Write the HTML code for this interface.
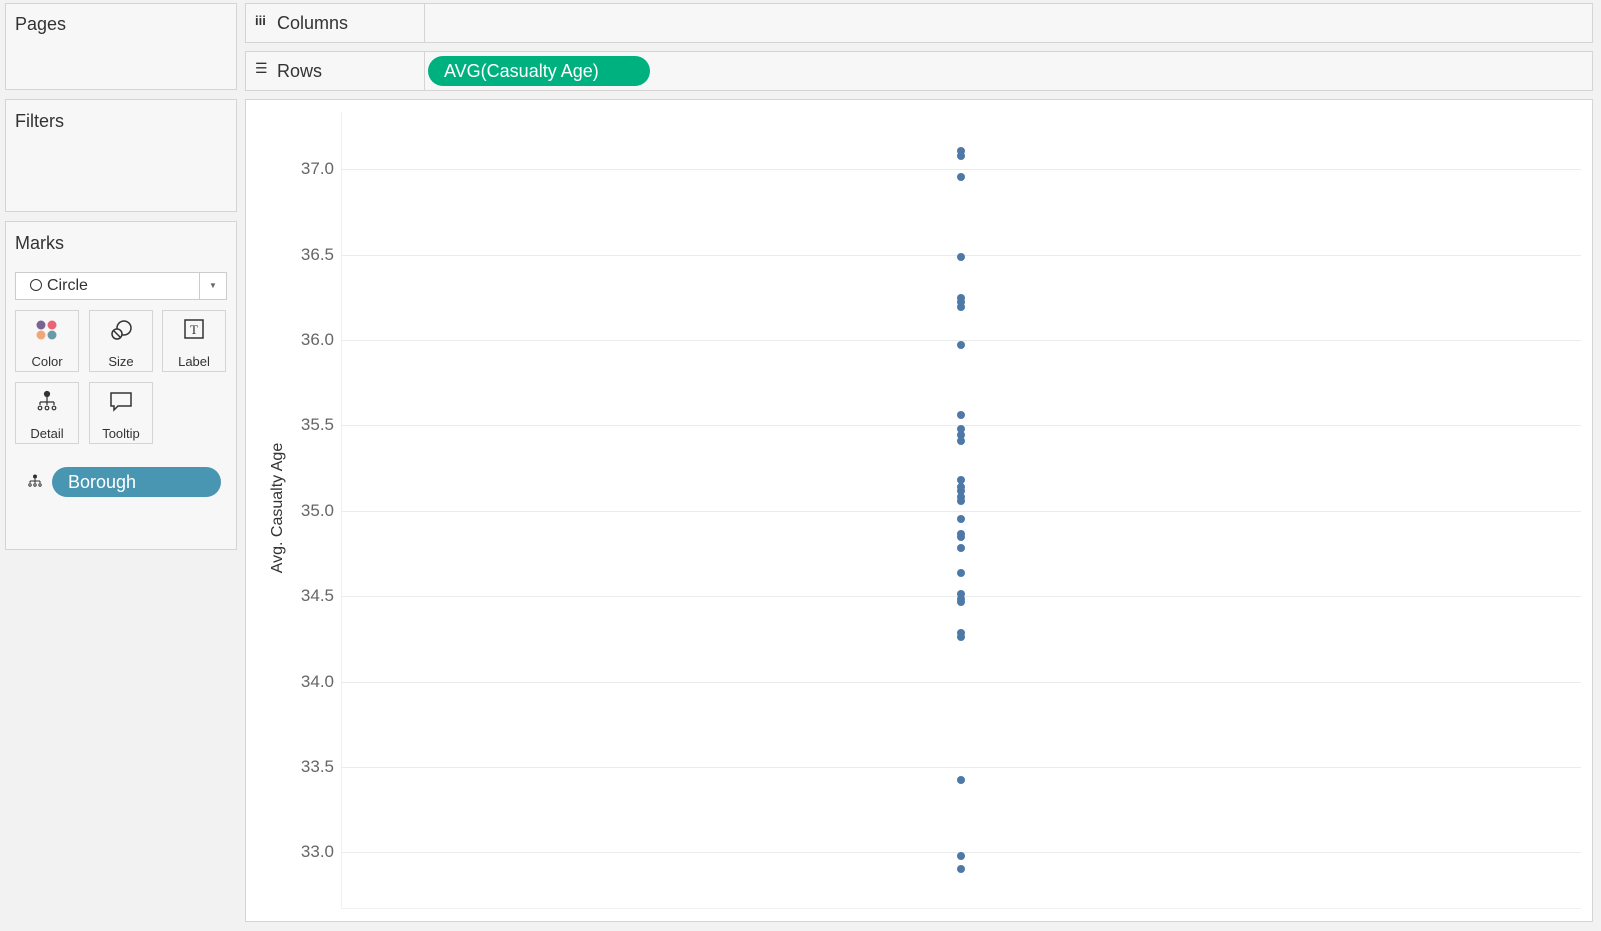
<!DOCTYPE html><html><head><style>
body{margin:0;width:1601px;height:931px;background:#f2f2f2;font-family:"Liberation Sans",sans-serif;position:relative;overflow:hidden;color:#333}
.b{position:absolute;background:#f7f7f7;border:1px solid #d4d4d4;box-sizing:border-box}
.t{position:absolute;font-size:18px;color:#333}
.btn{position:absolute;background:#f7f7f7;border:1px solid #d4d4d4;box-sizing:border-box;width:64px;height:62px;font-size:13px;text-align:center}
.btn span{position:absolute;bottom:2px;left:0;right:0}
.pill{position:absolute;border-radius:16px;color:#fff;font-size:18px}
.g{position:absolute;left:341px;width:1240px;height:1px;background:#ebebeb}
.yl{position:absolute;left:280px;width:54px;text-align:right;font-size:17px;color:#666}
.d{position:absolute;left:957px;width:8px;height:8px;border-radius:50%;background:#4e79a7}
</style></head><body>
<div class="b" style="left:5px;top:3px;width:232px;height:87px"></div><div class="t" style="left:15px;top:14px">Pages</div>
<div class="b" style="left:245px;top:3px;width:1348px;height:40px"></div>
<div style="position:absolute;left:424px;top:3px;width:1px;height:40px;background:#d4d4d4"></div>
<div class="t" style="left:255px;top:13px;font-size:13px;font-weight:bold">iii</div><div class="t" style="left:277px;top:13px">Columns</div>
<div class="b" style="left:245px;top:51px;width:1348px;height:40px"></div>
<div style="position:absolute;left:424px;top:51px;width:1px;height:40px;background:#d4d4d4"></div>
<div class="t" style="left:255px;top:60px;font-size:14px">☰</div><div class="t" style="left:277px;top:61px">Rows</div>
<div class="pill" style="left:428px;top:56px;width:222px;height:30px;background:#00b180;line-height:30px;text-indent:16px">AVG(Casualty Age)</div>
<div class="b" style="left:5px;top:99px;width:232px;height:113px"></div><div class="t" style="left:15px;top:111px">Filters</div>
<div class="b" style="left:5px;top:221px;width:232px;height:329px"></div><div class="t" style="left:15px;top:233px">Marks</div>
<div style="position:absolute;left:15px;top:272px;width:212px;height:28px;background:#fff;border:1px solid #ccc;box-sizing:border-box;font-size:16px;line-height:26px">
<span style="display:inline-block;width:10px;height:10px;border:1.5px solid #333;border-radius:50%;margin:0 5px 0 14px;vertical-align:-1px"></span>Circle
<div style="position:absolute;right:0;top:0;width:26px;height:26px;border-left:1px solid #ccc;font-size:8px;text-align:center;color:#666">▼</div></div>
<div class="btn" style="left:15px;top:310px"><svg width="28" height="28" style="margin-top:6px"><circle cx="8" cy="8" r="4.5" fill="#7b6393"/><circle cx="19" cy="8" r="4.5" fill="#e96576"/><circle cx="8" cy="18" r="4.5" fill="#f0a87b"/><circle cx="19" cy="18" r="4.5" fill="#6a9aa6"/></svg><span>Color</span></div>
<div class="btn" style="left:89px;top:310px"><svg width="28" height="28" style="margin-top:6px" fill="none" stroke="#333" stroke-width="1.5"><circle cx="17" cy="11" r="7"/><circle cx="10" cy="17" r="5" fill="#f7f7f7"/><line x1="7" y1="14" x2="13" y2="20"/></svg><span>Size</span></div>
<div class="btn" style="left:162px;top:310px"><svg width="28" height="28" style="margin-top:6px"><rect x="5" y="3" width="18" height="18" fill="none" stroke="#333" stroke-width="1.5"/><text x="14" y="17" font-size="13" text-anchor="middle" font-family="Liberation Serif" fill="#333">T</text></svg><span>Label</span></div>
<div class="btn" style="left:15px;top:382px"><svg width="28" height="28" style="margin-top:6px" stroke="#333" fill="none" stroke-width="1.2"><circle cx="14" cy="5" r="2.5" fill="#333"/><path d="M14 7v6M7 13h14M7 13v3M14 13v3M21 13v3"/><circle cx="7" cy="19" r="1.8"/><circle cx="14" cy="19" r="1.8"/><circle cx="21" cy="19" r="1.8"/></svg><span>Detail</span></div>
<div class="btn" style="left:89px;top:382px"><svg width="28" height="28" style="margin-top:6px" stroke="#333" fill="none" stroke-width="1.5"><path d="M4 4h20v13H11l-4 4v-4H4z"/></svg><span>Tooltip</span></div>
<svg style="position:absolute;left:28px;top:474px" width="16" height="16" stroke="#333" fill="none" stroke-width="1"><circle cx="7" cy="2.5" r="1.5" fill="#333"/><path d="M7 4v3M2 7h10M2 7v2M7 7v2M12 7v2"/><circle cx="2" cy="11" r="1.2"/><circle cx="7" cy="11" r="1.2"/><circle cx="12" cy="11" r="1.2"/></svg>
<div class="pill" style="left:52px;top:467px;width:169px;height:30px;background:#4996b2;line-height:30px;text-indent:16px">Borough</div>
<div style="position:absolute;left:245px;top:99px;width:1348px;height:823px;background:#fff;border:1px solid #d4d4d4;box-sizing:border-box"></div>
<div style="position:absolute;left:341px;top:112px;width:1px;height:797px;background:#f0f0f0"></div>
<div class="g" style="top:908px;background:#f0f0f0"></div>
<div class="g" style="top:169px"></div><div class="yl" style="top:159px">37.0</div>
<div class="g" style="top:255px"></div><div class="yl" style="top:245px">36.5</div>
<div class="g" style="top:340px"></div><div class="yl" style="top:330px">36.0</div>
<div class="g" style="top:425px"></div><div class="yl" style="top:415px">35.5</div>
<div class="g" style="top:511px"></div><div class="yl" style="top:501px">35.0</div>
<div class="g" style="top:596px"></div><div class="yl" style="top:586px">34.5</div>
<div class="g" style="top:682px"></div><div class="yl" style="top:672px">34.0</div>
<div class="g" style="top:767px"></div><div class="yl" style="top:757px">33.5</div>
<div class="g" style="top:852px"></div><div class="yl" style="top:842px">33.0</div>
<div style="position:absolute;left:188px;top:499px;width:180px;text-align:center;transform:rotate(-90deg);font-size:16px;color:#333">Avg. Casualty Age</div>
<div class="d" style="top:147px"></div><div class="d" style="top:152px"></div><div class="d" style="top:173px"></div><div class="d" style="top:253px"></div><div class="d" style="top:294px"></div><div class="d" style="top:298px"></div><div class="d" style="top:303px"></div><div class="d" style="top:341px"></div><div class="d" style="top:411px"></div><div class="d" style="top:425px"></div><div class="d" style="top:431px"></div><div class="d" style="top:437px"></div><div class="d" style="top:476px"></div><div class="d" style="top:483px"></div><div class="d" style="top:487px"></div><div class="d" style="top:493px"></div><div class="d" style="top:497px"></div><div class="d" style="top:515px"></div><div class="d" style="top:530px"></div><div class="d" style="top:533px"></div><div class="d" style="top:544px"></div><div class="d" style="top:569px"></div><div class="d" style="top:590px"></div><div class="d" style="top:595px"></div><div class="d" style="top:598px"></div><div class="d" style="top:629px"></div><div class="d" style="top:633px"></div><div class="d" style="top:776px"></div><div class="d" style="top:852px"></div><div class="d" style="top:865px"></div>
</body></html>
